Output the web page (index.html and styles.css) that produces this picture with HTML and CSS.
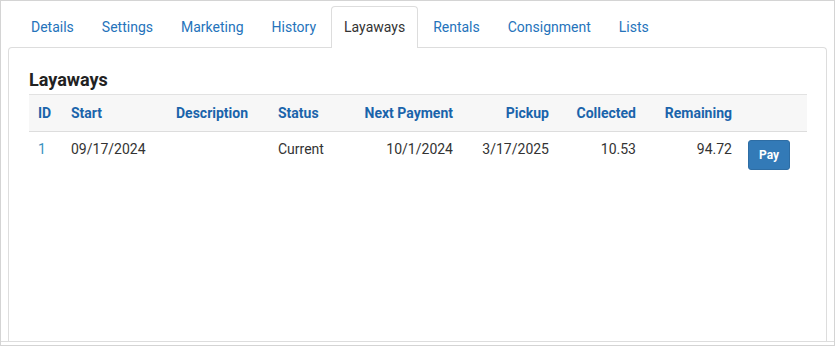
FILE: index.html
```html
<!DOCTYPE html>
<html lang="en">
<head>
  <meta charset="UTF-8">
  <title>Customer - Layaways</title>
  <link rel="stylesheet" href="styles.css">
</head>
<body>
  <div class="frame">
    <div class="tabset">
      <!-- Tab strip -->
      <ul class="nav-tabs">
        <li><a href="#">Details</a></li>
        <li><a href="#">Settings</a></li>
        <li><a href="#">Marketing</a></li>
        <li><a href="#">History</a></li>
        <li class="active"><a href="#">Layaways</a></li>
        <li><a href="#">Rentals</a></li>
        <li><a href="#">Consignment</a></li>
        <li><a href="#">Lists</a></li>
      </ul>

      <!-- Tab content -->
      <div class="tab-panel">
        <h3 class="panel-title">Layaways</h3>
        <table class="grid">
          <colgroup>
            <col class="c-id"><col class="c-start"><col class="c-desc"><col class="c-status">
            <col class="c-next"><col class="c-pickup"><col class="c-coll"><col class="c-rem"><col class="c-act">
          </colgroup>
          <thead>
            <tr>
              <th>ID</th>
              <th>Start</th>
              <th>Description</th>
              <th>Status</th>
              <th class="num">Next Payment</th>
              <th class="num">Pickup</th>
              <th class="num">Collected</th>
              <th class="num">Remaining</th>
              <th></th>
            </tr>
          </thead>
          <tbody>
            <tr>
              <td><a class="id-link" href="#">1</a></td>
              <td>09/17/2024</td>
              <td></td>
              <td>Current</td>
              <td class="num">10/1/2024</td>
              <td class="num">3/17/2025</td>
              <td class="num">10.53</td>
              <td class="num">94.72</td>
              <td class="act"><button class="btn-pay">Pay</button></td>
            </tr>
          </tbody>
        </table>
      </div>
    </div>
  </div>
</body>
</html>
```

FILE: styles.css
```css
/* Customer record: tabbed panel with layaway grid */
html, body {
  margin: 0;
  padding: 0;
  background: #fff;
}

body {
  font-family: Roboto, "Liberation Sans", sans-serif;
  font-size: 14px;
  line-height: 20px;
  color: #333;
}

a {
  text-decoration: none;
}

/* Outer frame of the screen */
.frame {
  box-sizing: border-box;
  height: 346px;
  border: 1px solid #d4d4d4;
  padding-bottom: 3px;
  display: flex;
  flex-direction: column;
}

.tabset {
  flex: 1;
  display: flex;
  flex-direction: column;
  padding: 5px 7px 0 7px;
  border-bottom: 1px solid #ddd;
}

/* Tabs */
.nav-tabs {
  list-style: none;
  margin: 0 0 -1px 10px;
  padding: 0;
  display: flex;
  position: relative;
  z-index: 1;
}

.nav-tabs li {
  margin-right: 2px;
}

.nav-tabs a {
  display: block;
  padding: 10px 12px 10px;
  border: 1px solid transparent;
  border-bottom: 0;
  border-radius: 4px 4px 0 0;
  color: #2573bb;
}

.nav-tabs li.active a {
  color: #333;
  background: #fff;
  border-color: #ddd;
  padding-bottom: 11px;
}

/* Panel */
.tab-panel {
  flex: 1;
  border: 1px solid #ddd;
  border-bottom: 0;
  border-radius: 4px 4px 0 0;
  padding: 21px 19px 0 20px;
}

.panel-title {
  margin: 0 0 3px 0;
  font-size: 18px;
  line-height: 22px;
  font-weight: 700;
  color: #222;
}

/* Grid */
.grid {
  border-collapse: collapse;
  table-layout: fixed;
  width: 778px;
}

.c-id { width: 33px; }
.c-start { width: 105px; }
.c-desc { width: 102px; }
.c-status { width: 86px; }
.c-next { width: 107px; }
.c-pickup { width: 96px; }
.c-coll { width: 87px; }
.c-rem { width: 96px; }
.c-act { width: 66px; }

.grid th {
  background: #f7f7f7;
  border-top: 1px solid #e2e2e2;
  border-bottom: 1px solid #ddd;
  color: #1a64ab;
  font-weight: 700;
  text-align: left;
  padding: 8px 9px;
  height: 20px;
}

.grid td {
  padding: 7px 9px;
  vertical-align: top;
  height: 32px;
}

.grid .num {
  text-align: right;
}

.grid td.act {
  padding: 8px 7px;
}

.id-link {
  color: #3a92bf;
}

.btn-pay {
  display: block;
  width: 42px;
  height: 30px;
  border: 1px solid #2e6da4;
  border-radius: 3px;
  background: #337ab7;
  color: #fff;
  font-family: Roboto, "Liberation Sans", sans-serif;
  font-size: 12px;
  font-weight: 700;
  padding: 0;
}
```
